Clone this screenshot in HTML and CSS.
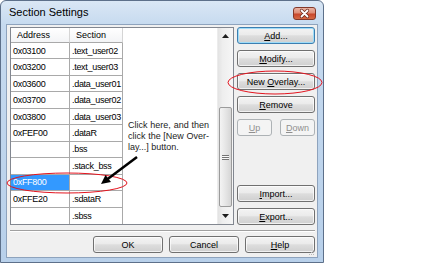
FILE: index.html
```html
<!DOCTYPE html>
<html lang="en">
<head>
    <meta charset="UTF-8">
    <title>Section Settings</title>
    <link rel="stylesheet" href="styles.css">
</head>
<body>
    <div class="window">
        <div class="titlebar">
            <span class="title">Section Settings</span>
            <span class="close-btn">
                <svg width="21" height="11" viewBox="0 0 21 11">
                    <path d="M7.5 2.5 L13.5 8.5 M13.5 2.5 L7.5 8.5" stroke="#6b2a1c" stroke-width="3.2" stroke-linecap="round"/>
                    <path d="M7.5 2.5 L13.5 8.5 M13.5 2.5 L7.5 8.5" stroke="#ffffff" stroke-width="1.8" stroke-linecap="round"/>
                </svg>
            </span>
        </div>

        <div class="client">
            <div class="list">
                <div class="grid-wrap">
                    <div class="grid">
                        <div class="hcell">Address</div>
                        <div class="hcell">Section</div>
                        <div class="cell">0x03100</div><div class="cell">.text_user02</div>
                        <div class="cell">0x03200</div><div class="cell">.text_user03</div>
                        <div class="cell">0x03600</div><div class="cell">.data_user01</div>
                        <div class="cell">0x03700</div><div class="cell">.data_user02</div>
                        <div class="cell">0x03800</div><div class="cell">.data_user03</div>
                        <div class="cell">0xFEF00</div><div class="cell">.dataR</div>
                        <div class="cell"></div><div class="cell">.bss</div>
                        <div class="cell"></div><div class="cell">.stack_bss</div>
                        <div class="cell sel">0xFF800</div><div class="cell"></div>
                        <div class="cell">0xFFE20</div><div class="cell">.sdataR</div>
                        <div class="cell"></div><div class="cell">.sbss</div>
                    </div>
                    <div class="note">
                        <span class="note-line just">Click here, and then</span>
                        <span class="note-line just">click the [New Over-</span>
                        <span class="note-line">lay...] button.</span>
                    </div>
                </div>
                <div class="scrollbar">
                    <div class="sb-btn">
                        <svg width="7" height="4" viewBox="0 0 7 4"><path d="M0 4 L3.5 0 L7 4 Z" fill="#1e1e1e"/></svg>
                    </div>
                    <div class="sb-track"><div class="sb-thumb"></div></div>
                    <div class="sb-btn">
                        <svg width="7" height="4" viewBox="0 0 7 4"><path d="M0 0 L3.5 4 L7 0 Z" fill="#1e1e1e"/></svg>
                    </div>
                </div>
            </div>

            <div class="side">
                <div class="btn default"><span><u>A</u>dd...</span></div>
                <div class="btn"><span><u>M</u>odify...</span></div>
                <div class="btn"><span>New <u>O</u>verlay...</span></div>
                <div class="btn"><span><u>R</u>emove</span></div>
                <div class="btn-pair">
                    <div class="btn disabled small"><span><u>U</u>p</span></div>
                    <div class="btn disabled small"><span><u>D</u>own</span></div>
                </div>
                <div class="btn push"><span><u>I</u>mport...</span></div>
                <div class="btn"><span><u>E</u>xport...</span></div>
            </div>

            <div class="separator"></div>

            <div class="footer">
                <div class="btn wide"><span>OK</span></div>
                <div class="btn wide"><span>Cancel</span></div>
                <div class="btn wide"><span><u>H</u>elp</span></div>
            </div>
        </div>

        <!-- marcas vermelhas e seta por cima do dialogo -->
        <svg class="marks" width="324" height="263" viewBox="0 0 324 263">
            <ellipse cx="67" cy="183" rx="60" ry="10" fill="none" stroke="#e3141e" stroke-width="1"/>
            <ellipse cx="275" cy="82.5" rx="47" ry="11.5" fill="none" stroke="#e3141e" stroke-width="1"/>
            <line x1="137" y1="157" x2="107" y2="179.5" stroke="#000" stroke-width="2.6"/>
            <polygon points="101,184 111,182 105.5,175" fill="#000"/>
            <g fill="#b9b9b9">
                <rect x="313" y="250" width="1" height="1"/>
                <rect x="311" y="252" width="1" height="1"/>
                <rect x="313" y="252" width="1" height="1"/>
                <rect x="309" y="254" width="1" height="1"/>
                <rect x="311" y="254" width="1" height="1"/>
                <rect x="313" y="254" width="1" height="1"/>
            </g>
        </svg>
    </div>
</body>
</html>
```

FILE: styles.css
```css
* {
    margin: 0;
    padding: 0;
    box-sizing: border-box;
}

body {
    background: #ffffff;
    font-family: "Liberation Sans", Arial, sans-serif;
    font-size: 9px;
    color: #000;
}

.window {
    position: relative;
    width: 324px;
    height: 263px;
    border: 1px solid #5d708a;
    border-radius: 6px 6px 0 0;
    background: linear-gradient(#dae7f5, #c6daef 24px, #b8d0ea);
    padding: 0 5px 4px 5px;
}

.titlebar {
    height: 23px;
    display: flex;
    justify-content: space-between;
    padding-left: 3px;
}

.title {
    font-size: 11px;
    line-height: 23px;
    color: #000;
}

.close-btn {
    width: 23px;
    height: 13px;
    margin-top: 6px;
    margin-right: 2px;
    border: 1px solid #83392a;
    border-radius: 3px;
    background: linear-gradient(#eab3a3, #de8d76 45%, #c8462b 55%, #d66a45);
    display: flex;
    align-items: center;
    justify-content: center;
}

.client {
    border: 1px solid #8ea3bd;
    background: #f0f0f0;
    height: 234px;
    display: grid;
    grid-template-columns: 224px 78px;
    grid-template-rows: 198px auto auto;
    column-gap: 3px;
    padding: 2px 2px 4px 3px;
}

/* lista */
.list {
    display: flex;
    border: 1px solid #828790;
    background: #fff;
}

.grid-wrap {
    position: relative;
    flex: 1;
    background: #fff;
}

.grid {
    display: grid;
    grid-template-columns: 59px 53px;
    grid-template-rows: 15px repeat(11, 1fr);
    height: 100%;
}

.hcell {
    background: linear-gradient(#ffffff, #f3f4f6);
    border-right: 1px solid #d5d5d5;
    border-bottom: 1px solid #a9a9a9;
    padding-left: 6px;
    line-height: 14px;
}

.cell {
    border-right: 1px solid #a9a9a9;
    border-bottom: 1px solid #a9a9a9;
    padding-left: 2px;
    display: flex;
    align-items: center;
    white-space: nowrap;
    overflow: hidden;
    letter-spacing: -0.3px;
}

.cell:nth-last-child(-n+2) {
    border-bottom: none;
}

.cell.sel {
    background: #3399ff;
    color: #fff;
}

.note {
    position: absolute;
    left: 117px;
    top: 92px;
    width: 81px;
    color: #1c1c1c;
    line-height: 11px;
}

.note-line {
    display: block;
    white-space: nowrap;
}

.note-line.just {
    text-align: justify;
    text-align-last: justify;
}

/* barra de rolagem */
.scrollbar {
    width: 16px;
    display: flex;
    flex-direction: column;
    background: linear-gradient(to right, #e3e3e3, #eeeeee 30%, #f6f6f6);
    border-left: 1px solid #ececec;
}

.sb-btn {
    height: 16px;
    display: flex;
    align-items: center;
    justify-content: center;
}

.sb-track {
    flex: 1;
    padding: 0 1px;
}

.sb-thumb {
    margin-top: 63px;
    height: 100px;
    border: 1px solid #9b9b9b;
    border-radius: 2px;
    background: linear-gradient(to right, #f4f4f4, #e6e6e6 50%, #d6d6d6);
    display: flex;
    align-items: center;
    justify-content: center;
}

.sb-thumb::before {
    content: "";
    width: 7px;
    height: 5px;
    background: repeating-linear-gradient(#747474 0 1px, #f8f8f8 1px 2px);
}

/* botoes */
.side {
    display: flex;
    flex-direction: column;
    gap: 6px;
}

.btn {
    height: 17px;
    border: 1px solid #707070;
    border-radius: 3px;
    background: linear-gradient(#f3f3f3, #ebebeb 45%, #dddddd 52%, #cfcfcf);
    box-shadow: inset 0 0 0 1px rgba(255, 255, 255, 0.7);
    display: flex;
    align-items: center;
    justify-content: center;
    color: #000;
    white-space: nowrap;
}

.btn.default {
    border-color: #3c7fb1;
    box-shadow: inset 0 0 0 1px #9fdcf8;
}

.btn.disabled {
    border-color: #adb2b5;
    background: #f4f4f4;
    box-shadow: none;
    color: #8f8f8f;
}

.btn-pair {
    display: flex;
    justify-content: space-between;
}

.btn.small {
    width: 35px;
}

.btn.push {
    margin-top: auto;
}

.separator {
    grid-column: 1 / -1;
    margin-top: 5px;
    height: 2px;
    border-top: 1px solid #a0a0a0;
    border-bottom: 1px solid #ffffff;
}

.footer {
    grid-column: 1 / -1;
    margin-top: 4px;
    display: flex;
    justify-content: flex-end;
    gap: 6px;
}

.btn.wide {
    width: 70px;
}

.marks {
    position: absolute;
    left: -1px;
    top: -1px;
    pointer-events: none;
}
```
